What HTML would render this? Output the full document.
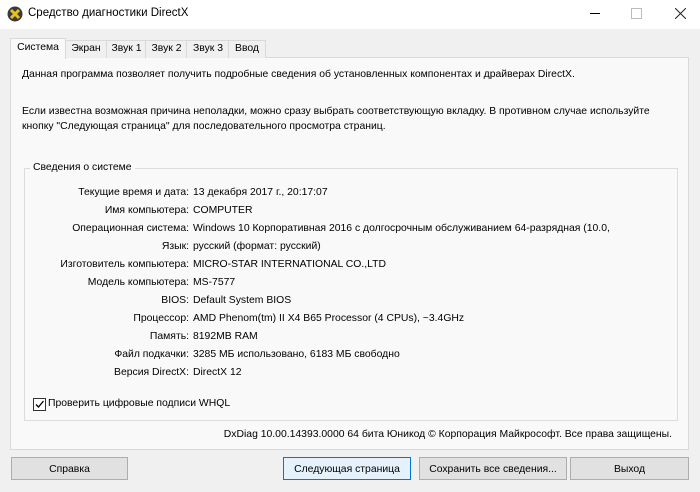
<!DOCTYPE html><html><head><meta charset="utf-8"><style>
body{margin:0;width:700px;height:492px;background:#f0f0f0;font-family:"Liberation Sans","DejaVu Sans",sans-serif;font-size:10.4px;color:#000;position:relative;overflow:hidden}
.a{position:absolute;white-space:nowrap}
.title{left:0;top:0;width:700px;height:29px;background:#fff}
.tab{position:absolute;top:40px;height:17px;border:1px solid #d9d9d9;border-bottom:none;background:#f0f0f0;line-height:16px;text-align:center}
.panel{left:10px;top:57px;width:677px;height:391px;background:#f9f9f9;border:1px solid #d9d9d9}
.grp{left:24px;top:168px;width:652px;height:251px;border:1px solid #dcdcdc}
.l{position:absolute;right:511px;text-align:right}
.v{position:absolute;left:193px}
.btn{position:absolute;top:457px;height:21px;border:1px solid #adadad;background:#e1e1e1;text-align:center;line-height:24px}
</style></head><body>
<div class="a title"></div>
<svg class="a" style="left:7px;top:6px" width="16" height="16"><circle cx="8" cy="8" r="7.5" fill="#3a3a3a"/><path d="M4 4L12 12M12 4L4 12" stroke="#e8c21a" stroke-width="3"/></svg>
<div class="a" style="left:28px;top:7px;font-size:11.5px">Средство диагностики DirectX</div>
<div class="a" style="left:590px;top:13px;width:10px;height:1px;background:#000"></div>
<div class="a" style="left:631px;top:8px;width:9px;height:9px;border:1px solid #bbb"></div>
<svg class="a" style="left:675px;top:8px" width="11" height="11"><path d="M0 0L11 11M11 0L0 11" stroke="#222" stroke-width="1"/></svg>
<div class="a panel"></div>
<div class="tab" style="left:10px;top:38px;height:20px;width:54px;background:#f9f9f9;z-index:2;line-height:18px">Система</div>
<div class="tab" style="left:64px;width:42px">Экран</div>
<div class="tab" style="left:106px;width:39px">Звук 1</div>
<div class="tab" style="left:145px;width:41px">Звук 2</div>
<div class="tab" style="left:186px;width:42px">Звук 3</div>
<div class="tab" style="left:228px;width:36px">Ввод</div>
<div class="a" style="left:22px;top:69px">Данная программа позволяет получить подробные сведения об установленных компонентах и драйверах DirectX.</div>
<div class="a" style="left:22px;top:104px;line-height:15px">Если известна возможная причина неполадки, можно сразу выбрать соответствующую вкладку. В противном случае используйте<br>кнопку "Следующая страница" для последовательного просмотра страниц.</div>
<div class="a grp"></div>
<div class="a" style="left:30px;top:162px;background:#f9f9f9;padding:0 3px">Сведения о системе</div>
<div class="a" style="left:0;top:184px;width:700px;line-height:18px">
<div class="l" style="top:0">Текущие время и дата:</div><div class="v" style="top:0">13 декабря 2017 г., 20:17:07</div>
<div class="l" style="top:18px">Имя компьютера:</div><div class="v" style="top:18px">COMPUTER</div>
<div class="l" style="top:36px">Операционная система:</div><div class="v" style="top:36px">Windows 10 Корпоративная 2016 с долгосрочным обслуживанием 64-разрядная (10.0,</div>
<div class="l" style="top:54px">Язык:</div><div class="v" style="top:54px">русский (формат: русский)</div>
<div class="l" style="top:72px">Изготовитель компьютера:</div><div class="v" style="top:72px">MICRO-STAR INTERNATIONAL CO.,LTD</div>
<div class="l" style="top:90px">Модель компьютера:</div><div class="v" style="top:90px">MS-7577</div>
<div class="l" style="top:108px">BIOS:</div><div class="v" style="top:108px">Default System BIOS</div>
<div class="l" style="top:126px">Процессор:</div><div class="v" style="top:126px">AMD Phenom(tm) II X4 B65 Processor (4 CPUs), ~3.4GHz</div>
<div class="l" style="top:144px">Память:</div><div class="v" style="top:144px">8192MB RAM</div>
<div class="l" style="top:162px">Файл подкачки:</div><div class="v" style="top:162px">3285 МБ использовано, 6183 МБ свободно</div>
<div class="l" style="top:180px">Версия DirectX:</div><div class="v" style="top:180px">DirectX 12</div>
</div>
<div class="a" style="left:33px;top:398px;width:11px;height:11px;border:1px solid #333;background:#fff"></div>
<svg class="a" style="left:34px;top:399px" width="11" height="11"><path d="M2 5.5L4.5 8L9.5 2" stroke="#000" fill="none" stroke-width="1.3"/></svg>
<div class="a" style="left:48px;top:398px">Проверить цифровые подписи WHQL</div>
<div class="a" style="right:28px;top:429px">DxDiag 10.00.14393.0000 64 бита Юникод © Корпорация Майкрософт. Все права защищены.</div>
<div class="btn" style="left:11px;width:115px">Справка</div>
<div class="btn" style="left:283px;width:126px;border-color:#0078d7;background:#e5f1fb">Следующая страница</div>
<div class="btn" style="left:419px;width:146px">Сохранить все сведения...</div>
<div class="btn" style="left:570px;width:117px">Выход</div>
</body></html>
